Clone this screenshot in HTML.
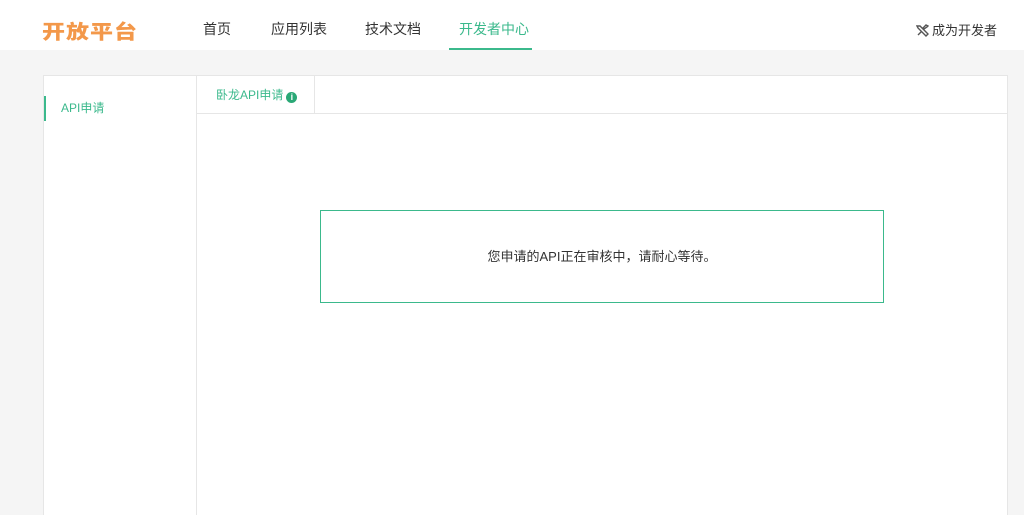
<!DOCTYPE html><html><head><meta charset="utf-8"><style>
*{margin:0;padding:0;box-sizing:border-box}
html,body{width:1024px;height:515px;overflow:hidden}
body{background:#f5f5f5;font-family:"Liberation Sans","Noto Sans CJK SC",sans-serif;color:#333;position:relative}
.hd{position:absolute;left:0;top:0;width:1024px;height:50px;background:#fff}
.logo{position:absolute;left:42px;top:13px;font-size:23px;font-weight:900;color:#f3984a;letter-spacing:1px;transform:scaleY(0.85);transform-origin:left center}
.nav{position:absolute;top:19px;font-size:14px;color:#333}
.act{color:#3bb98c}
.ul{position:absolute;left:449px;top:48px;width:83px;height:2px;background:#3bb98c}
.dev{position:absolute;left:916px;top:20px;font-size:13px;color:#333}
.panel{position:absolute;left:43px;top:75px;width:965px;height:440px;background:#fff;border:1px solid #e6e6e6;border-bottom:none}
.side{position:absolute;left:0;top:0;width:153px;height:100%;border-right:1px solid #e6e6e6}
.si{position:absolute;left:0;top:20px;height:25px;border-left:2px solid #3bb98c;padding-left:15px;line-height:25px;font-size:12px;color:#3bb98c}
.tabs{position:absolute;left:153px;top:0;right:0;height:38px;border-bottom:1px solid #e6e6e6}
.tab{position:absolute;left:0;top:0;width:118px;height:38px;border-right:1px solid #e6e6e6;font-size:12px;color:#3bb98c;line-height:38px;padding-left:19px}
.i{display:inline-block;width:11px;height:11px;border-radius:50%;background:#2aa876;color:#fff;font-size:9px;line-height:11px;text-align:center;font-weight:bold;vertical-align:-1px;margin-left:3px}
.box{position:absolute;left:276px;top:134px;width:564px;height:93px;border:1px solid #3bb98c;text-align:center;line-height:91px;font-size:13px;color:#333}
</style></head><body>
<div class="hd">
<div class="logo">开放平台</div>
<div class="nav" style="left:203px">首页</div>
<div class="nav" style="left:271px">应用列表</div>
<div class="nav" style="left:365px">技术文档</div>
<div class="nav act" style="left:459px">开发者中心</div>
<div class="ul"></div>
<div class="dev"><svg width="13" height="13" viewBox="0 0 13 13" style="vertical-align:-2px;margin-right:3px"><path d="M1 2l3 0 8 8-2 2-8-8z M12 2l-2-1-3 3 1 1 3-2z M2 11l4-4" stroke="#555" stroke-width="1.4" fill="none"/></svg>成为开发者</div>
</div>
<div class="panel">
<div class="side"><div class="si">API申请</div></div>
<div class="tabs"><div class="tab">卧龙API申请<span class="i">i</span></div></div>
<div class="box">您申请的API正在审核中，请耐心等待。</div>
</div>
</body></html>
